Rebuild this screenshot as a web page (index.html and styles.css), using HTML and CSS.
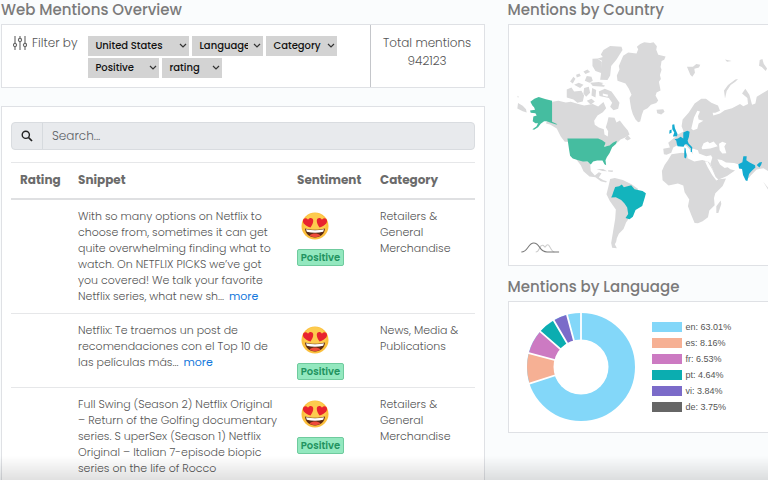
FILE: index.html
```html
<!DOCTYPE html>
<html lang="en">
<head>
<meta charset="utf-8">
<meta name="viewport" content="width=device-width, initial-scale=1">
<title>Web Mentions Overview</title>
<link rel="stylesheet" href="styles.css">
</head>
<body>
<svg class="defs" aria-hidden="true">
  <symbol id="chevron" viewBox="0 0 8 6"><path d="M1 1l3 3 3-3" fill="none" stroke="#333" stroke-width="1.2"/></symbol>
  <symbol id="love" viewBox="0 0 28 28">
    <circle cx="14" cy="14" r="13.5" fill="#fbbf3c"/>
    <circle cx="14" cy="12" r="11" fill="#fdcb4e"/>
    <path d="M4 16.5c6 1.700 14 1.700 20 0-.5 5.500-4.500 9-10 9s-9.500-3.500-10-9z" fill="#5b2a14"/>
    <path d="M5 17.300c6 1.400 12 1.400 18 0l-.8 2.500c-5 1.300-11.400 1.300-16.400 0z" fill="#fff"/>
    <path d="M8.500 23.500c3-2.600 8-2.600 11 0-3 2.300-8 2.300-11 0z" fill="#ee4b3a"/>
    <path d="M9.500 15.500C5 14 1.500 11.500 2 8.500c.5-2.800 3.800-3 5-.8 1.300-2.300 4.800-2.100 5.200.6.300 2.500-1.200 5-2.700 7.200z" fill="#e8232f"/>
    <path d="M18.500 15.500c4.500-1.500 8-4 7.500-7-.5-2.800-3.800-3-5-.8-1.300-2.300-4.800-2.100-5.200.6-.3 2.500 1.200 5 2.700 7.200z" fill="#e8232f"/>
  </symbol>
</svg>
<main class="page">
  <section class="column">
    <h1 class="title">Web Mentions Overview</h1>
    <div class="panel summary">
      <div class="filters">
        <div class="filter-label">
          <svg class="sliders" viewBox="0 0 14 14" fill="none" stroke="#666" stroke-width="1.100" aria-hidden="true">
            <path d="M2 0v7M2 11v3M7 0v2M7 6v8M12 0v7M12 11v3"/>
            <circle cx="2" cy="9" r="1.600"/><circle cx="7" cy="4" r="1.600"/><circle cx="12" cy="9" r="1.600"/>
          </svg>
          <span>Filter by</span>
        </div>
        <div class="filter-list">
          <span class="pick pick-wide"><select aria-label="Country"><option>United States</option></select><svg><use href="#chevron"/></svg></span>
          <span class="pick"><select aria-label="Language"><option>Language</option></select><svg><use href="#chevron"/></svg></span>
          <span class="pick"><select aria-label="Category"><option>Category</option></select><svg><use href="#chevron"/></svg></span>
          <span class="pick"><select aria-label="Sentiment"><option>Positive</option></select><svg><use href="#chevron"/></svg></span>
          <span class="pick pick-small"><select aria-label="Rating"><option>rating</option></select><svg><use href="#chevron"/></svg></span>
        </div>
      </div>
      <div class="total">
        <div>Total mentions</div>
        <div>942123</div>
      </div>
    </div>

    <div class="panel mentions">
      <label class="search">
        <span class="search-icon"><svg viewBox="0 0 12 12" fill="none" stroke="#222" aria-hidden="true"><circle cx="4.800" cy="4.800" r="3.600" stroke-width="1.400"/><path d="M7.500 7.500l3.500 3.500" stroke-width="1.700"/></svg></span>
        <input type="text" placeholder="Search..." aria-label="Search">
      </label>
      <table>
        <thead>
          <tr><th class="c-rating">Rating</th><th class="c-snippet">Snippet</th><th class="c-sentiment">Sentiment</th><th>Category</th></tr>
        </thead>
        <tbody>
          <tr>
            <td></td>
            <td class="snippet">With so many options on Netflix to choose from, sometimes it can get quite overwhelming finding what to watch. On NETFLIX PICKS we’ve got you covered! We talk your favorite Netflix series, what new sh... <a href="#">more</a></td>
            <td class="sentiment"><svg class="emoji"><use href="#love"/></svg><span class="badge">Positive</span></td>
            <td>Retailers &amp; General Merchandise</td>
          </tr>
          <tr>
            <td></td>
            <td class="snippet">Netflix: Te traemos un post de recomendaciones con el Top 10 de las películas más... <a href="#">more</a></td>
            <td class="sentiment"><svg class="emoji"><use href="#love"/></svg><span class="badge">Positive</span></td>
            <td>News, Media &amp; Publications</td>
          </tr>
          <tr>
            <td></td>
            <td class="snippet">Full Swing (Season 2) Netflix Original – Return of the Golfing documentary series. S uperSex (Season 1) Netflix Original – Italian 7-episode biopic series on the life of Rocco</td>
            <td class="sentiment"><svg class="emoji"><use href="#love"/></svg><span class="badge">Positive</span></td>
            <td>Retailers &amp; General Merchandise</td>
          </tr>
        </tbody>
      </table>
    </div>
  </section>

  <section class="column">
    <h2 class="title">Mentions by Country</h2>
    <div class="panel side map">
      <svg viewBox="3 3 777 720" role="img" aria-label="World map of mentions">
        <g fill="#d9d9da">
          <path d="M345 95l15-10 25 3 5-12-4-8 10-8 12-5 18 2 10-2 10 12-2 10 6 15 22 5-4 10-8 4-3 18 3 8-5 16 3 12-6 8 5 26-12 6-3 10 8 14-6 8-16 5-10 10-12 6-5 14-5 20-6 2-8-8-8-16-5-16-3-18-2-14 6-10-8-18-10-16-24-8-2-16 8-18-2-10z"/>
          <path d="M286 78l20-12 34 2 3 10-18 28-16 20-3 28-8 14-22-1 3-20-17-6-9-15v-22l16-1 15-4-6-8z"/>
          <path d="M176 196l14-6 8 12 22-2 8 14-4 18-16 4-12-10-20-6zM186 172l10-14 6 6-8 14zM198 182l14-6 14 6-10 10zM204 152l10-4 4 8-12 4zM226 142l12-6 8 8-14 6zM236 156l14 2 4 12-10 6-14-6zM246 176l26-2 20 4-4 10-34-2zM228 192l14-4 4 18-12 12-8-10zM252 192l12 6-2 22-12-6zM272 202l18-8 20 8 14 20 10 14-4 18-14 4-10-10 6-12-10-14-28-6zM236 230l14-6 10 8-12 10z"/>
          <path d="M133 233l18-3 22 5 15-2 20 6 20 5 26-4 16 7 16-13 8 18-10 12-16 10-10 16 2 12 12 8 15 5 2 16 10 6 1-16-7-12 5-16 3-14 18 2 6 14 10-6 12 16 12 14 5 12-13 9-14 6-8 8-12 6-22 8-8-8-14-6-103-1-12-16-12-24-20-12-12-3z"/>
          <path d="M350 344l8-12 10 12-10 5zM28 215l4 2-2 5zM30 237l14 8 10 10 2 10-12-4-16-8z"/>
          <path d="M202 402l44 14 2 24 12 14 12-10 8 3-8 13 14 8 10 3-2 4-16-4-16-12-18-2-18-16-8-18zM265 434l20 0 12 7-14-1zM300 438l15 1-2 4-13-1z"/>
          <path d="M306 464l14-3 24 6 26 13 20 14-8 12-14 62-4 12-10 14-8 20-14 14-6 14-2 10-4 8 6 12-14-2-3-14 6-36 6-36 2-28-18-26-10-20 6-24z"/>
          <path d="M445 257l20-2 4 8-10 8-12-4zM536 128l18 0 10-8 12 2-4 8-14 4 2 12-8 12-6-6zM650 223l-3-24 12-16 22-17 8-1-8 8-14 10-12 18zM650 106l20 5-14 2zM754 108l8-3 4 14 10 14-4 8-12-12-8-4z"/>
          <path d="M520 306l3-20 18-20 18-28 20-14 14 0 16 12 20 8 6 16-14 6-8 0 2 8 20-6 14-10 22-6 24-12 10 6 14-6-2-18-16-14 10-14 12 18 8 30 10-4 4-20 16-10 20-12 18-14v300l-8-10-10-30-16-10-20 4-18 18-6 8-10-8-14-32-20-6-24-1-13-8-13-2 8 16 14 10 9-2 8 6 14 4-24 16-28 12-14-30-8-18 6-18-4-8-14 3-22-8-3-10-14-4-6 0 6 18-8-14-14-14-16-6-22 12-6 16-14 6-8-2-2-16 20-4-5-14 30-26 16-8z"/>
          <path d="M490 390l30-4 16 2 2 14 20 10 24-5 20 6 10 20 14 24 6 8 21-2-10 22-22 22-4 14 2 22-16 16-4 20-16 12-14 6-10-1-10-24-10-26 4-20-14-22-4-20-16-6-28 6-18-16-2-28 8-18 10-14z"/>
          <path d="M637 529l2 10-9 27-6 0v-20zM764 472l16 20v6z"/>
        </g>
        <g fill="#fff">
          <path d="M580 371l6-14 12-5 6 5 12-5 12 14-22 7-24 2zM632 359l10-6 12 4-6 10 6 20-12 1-8-10z"/>
          <path d="M549 314l8-34 10-20 8 2-6 14 2 10 14 4-14 8-4 16-12 4z"/>
          <path d="M280 180l8-4 8 4-8 4zM284 208l16 4-2 6-14-4zM252 104l16 0 14 10-4 22 4-26-14-6z"/>
          <path d="M590 412l8 0 14 24 10 22 8 8-6 3-12-16-14-24z"/>
        </g>
        <g fill="#45bda0">
          <path d="M67 233l12-9 13-5 19 6 21 5v63l16 7-4 1-18-6-10-4-8 0-10 8-8 10-12 8-5-2 12-8 5-10-8 0-8-6 2-14 10-3-4-7-14-1-2-7 15-2-3-8-5-5z"/>
          <path d="M178 343h92l12 5 10 8-4 12 16-4 10-8 12-6-2 9-12 10-8 18-8 12-4 9 2 15-5-3-6-11-16 0-12 3-7 9-10-9-14 0-16-5-14-4-8-8-3-18z"/>
        </g>
        <path fill="#13b4bd" d="M312 514l4-12 5-14 12-2 8-5 6 8 22-6 10 12 24 5 10 7-3 12-8 26-20 12-8 20-10 8-12-4 8-12-3-19-8-12-10-11-16-8-14 1z"/>
        <g fill="#14abd0">
          <path d="M492 302l6-2 2 12 8 18-2 6-12 1 4-12-6-10zM484 318l6-2 0 10-7 3zM499 345l10-2 8-5 8 5 0-18 12-5 7 3-2 15-4 12 3 8 11 11-1 15-4-1 1-10-12-13-6 0-4 8-18-2-2-6-2-10zM529 370l3 3 1 9 2 12-2 9-5-3 0-16z"/>
          <path d="M705 396l10 0-1 12 10 7 16 8 1 7-12 11-7 8-5 21-5-1-8-17-3-18-9-1-2-13 12-6zM745 422l8-7 8-2-3 9-5 8z"/>
        </g>
        <path d="M83 683c12 0 10-20 20-20 8 0 6 12 12 0 10-10 12 20 24 20" fill="none" stroke="#ccc" stroke-width="3"/>
        <path d="M40 683c20 0 20-27 37-27 20 0 15 27 40 27h36" fill="none" stroke="#777" stroke-width="3"/>
      </svg>
    </div>

    <h2 class="title">Mentions by Language</h2>
    <div class="panel side languages">
      <svg class="donut" viewBox="-54 -54 108 108" role="img" aria-label="Share of mentions by language">
        <g class="slices" fill="none" stroke-width="27" transform="rotate(-90)">
          <circle r="40.500" pathLength="8993" stroke="#83d7f9"/>
          <circle r="40.500" pathLength="8993" stroke="#f6b094" stroke-dasharray="816 8177" stroke-dashoffset="-6301"/>
          <circle r="40.500" pathLength="8993" stroke="#cc7ac2" stroke-dasharray="653 8340" stroke-dashoffset="-7117"/>
          <circle r="40.500" pathLength="8993" stroke="#0badb0" stroke-dasharray="464 8529" stroke-dashoffset="-7770"/>
          <circle r="40.500" pathLength="8993" stroke="#7b6bc9" stroke-dasharray="384 8609" stroke-dashoffset="-8234"/>
        </g>
        <path d="M0 0V-55M0 0L-52.400 16.800M0 0L-53.100 -14.100M0 0L-41.500 -36.100M0 0L-27.800 -47.500M0 0L-14.200 -53.100" stroke="#fff" stroke-width="1.800"/>
        <circle r="27.500" fill="#fff"/>
      </svg>
      <ul class="legend">
        <li class="en">en: 63.01%</li>
        <li class="es">es: 8.16%</li>
        <li class="fr">fr: 6.53%</li>
        <li class="pt">pt: 4.64%</li>
        <li class="vi">vi: 3.84%</li>
        <li class="de">de: 3.75%</li>
      </ul>
    </div>
  </section>
</main>
</body>
</html>
```
FILE: styles.css
```css
* { box-sizing: border-box; }

body {
  margin: 0;
  background: #fafcfd;
  color: #555;
  font: 300 12px/18px Poppins, Inter, sans-serif;
}

.defs { display: none; }

.page {
  display: grid;
  grid-template-columns: minmax(0, 13fr) minmax(0, 7fr);
  gap: 23px;
  height: 100vh;
  padding-left: 1px;
  overflow: hidden;
}

.page::after {
  content: "";
  position: fixed;
  inset: auto 0 0 0;
  height: 24px;
  background: linear-gradient(rgba(0, 0, 0, 0), rgba(0, 0, 0, 0.12));
  pointer-events: none;
}

.title {
  margin: 0;
  padding-bottom: 4px;
  font-size: 15px;
  font-weight: 500;
  line-height: 20px;
  color: #7a7a7a;
}

.panel {
  background: #fff;
  border: 1px solid #dfe1e5;
}

.summary {
  display: flex;
  height: 64px;
  margin-bottom: 18px;
}

.filters {
  display: flex;
  flex: 1;
  gap: 11px;
  padding: 11px;
}

.filter-label {
  display: flex;
  gap: 5px;
  height: 14px;
  line-height: 14px;
  white-space: nowrap;
}

.sliders { width: 14px; height: 14px; }

.filter-list {
  display: flex;
  flex: 1;
  flex-wrap: wrap;
  align-content: flex-start;
  gap: 2px 3px;
}

.pick { position: relative; width: 71px; height: 20px; }
.pick-wide { width: 101px; }
.pick-small { width: 60px; }

.pick select {
  width: 100%;
  height: 20px;
  padding: 0 15px 0 7px;
  border: 0;
  border-radius: 0;
  appearance: none;
  background: #d3d3d3;
  color: #111;
  font: 500 10px/20px Poppins, Inter, sans-serif;
}

.pick svg {
  position: absolute;
  top: 7px;
  right: 2px;
  width: 8px;
  height: 6px;
  pointer-events: none;
}

.total {
  width: 114px;
  padding-top: 9px;
  border-left: 1px solid #c4c6ca;
  text-align: center;
}

.mentions { padding: 15px 9px; }

.search {
  display: flex;
  height: 28px;
  margin-bottom: 12px;
  border: 1px solid #d9dce0;
  border-radius: 4px;
  background: #e8eaed;
}

.search-icon {
  display: grid;
  place-items: center;
  width: 31px;
  border-right: 1px solid #d6dade;
}

.search-icon svg { width: 12px; height: 12px; }

.search input {
  flex: 1;
  min-width: 0;
  padding: 0 9px;
  border: 0;
  background: transparent;
  font: inherit;
}

.search input::placeholder { color: #5c6166; opacity: 1; }

table {
  width: 100%;
  table-layout: fixed;
  border-collapse: collapse;
}

th, td {
  padding: 8px 0 9px 9px;
  border-top: 1px solid #e6e7e9;
  text-align: left;
  vertical-align: top;
}

th {
  border-bottom: 2px solid #dfe0e2;
  font-weight: 700;
  color: #6b6b6b;
}

td { font-size: 11px; line-height: 16px; }

.c-rating { width: 58px; }
.c-snippet { width: 219px; }
.c-sentiment { width: 83px; }

.snippet { padding-right: 6px; }
.sentiment { padding-bottom: 7px; }

a { margin-left: 2px; color: #1478dc; font-weight: 400; text-decoration: none; }

.emoji {
  display: block;
  width: 28px;
  height: 28px;
  margin: 4px 4px 9px;
}

.badge {
  display: block;
  width: 47px;
  border: 1px solid #6fcb9e;
  border-radius: 2px;
  background: #93e8bf;
  color: #22935f;
  font-size: 10px;
  font-weight: 600;
  line-height: 15px;
  text-align: center;
}

.side { border-right: 0; }

.map { margin-bottom: 11px; overflow: hidden; }
.map svg { display: block; width: 100%; }

.languages {
  display: flex;
  align-items: center;
  gap: 17px;
  height: 132px;
  padding-left: 18px;
}

.donut { width: 108px; height: 108px; flex: none; }

.legend {
  display: grid;
  gap: 6px;
  margin: 0;
  padding: 0;
  list-style: none;
  color: #555;
  font: 9px/10px "Liberation Sans", Arial, sans-serif;
}

.legend li { display: flex; gap: 4px; white-space: nowrap; }
.legend li::before { content: ""; width: 30px; height: 10px; background: #83d7f9; }
.legend .es::before { background: #f6b094; }
.legend .fr::before { background: #cc7ac2; }
.legend .pt::before { background: #0badb0; }
.legend .vi::before { background: #7b6bc9; }
.legend .de::before { background: #666; }
```
